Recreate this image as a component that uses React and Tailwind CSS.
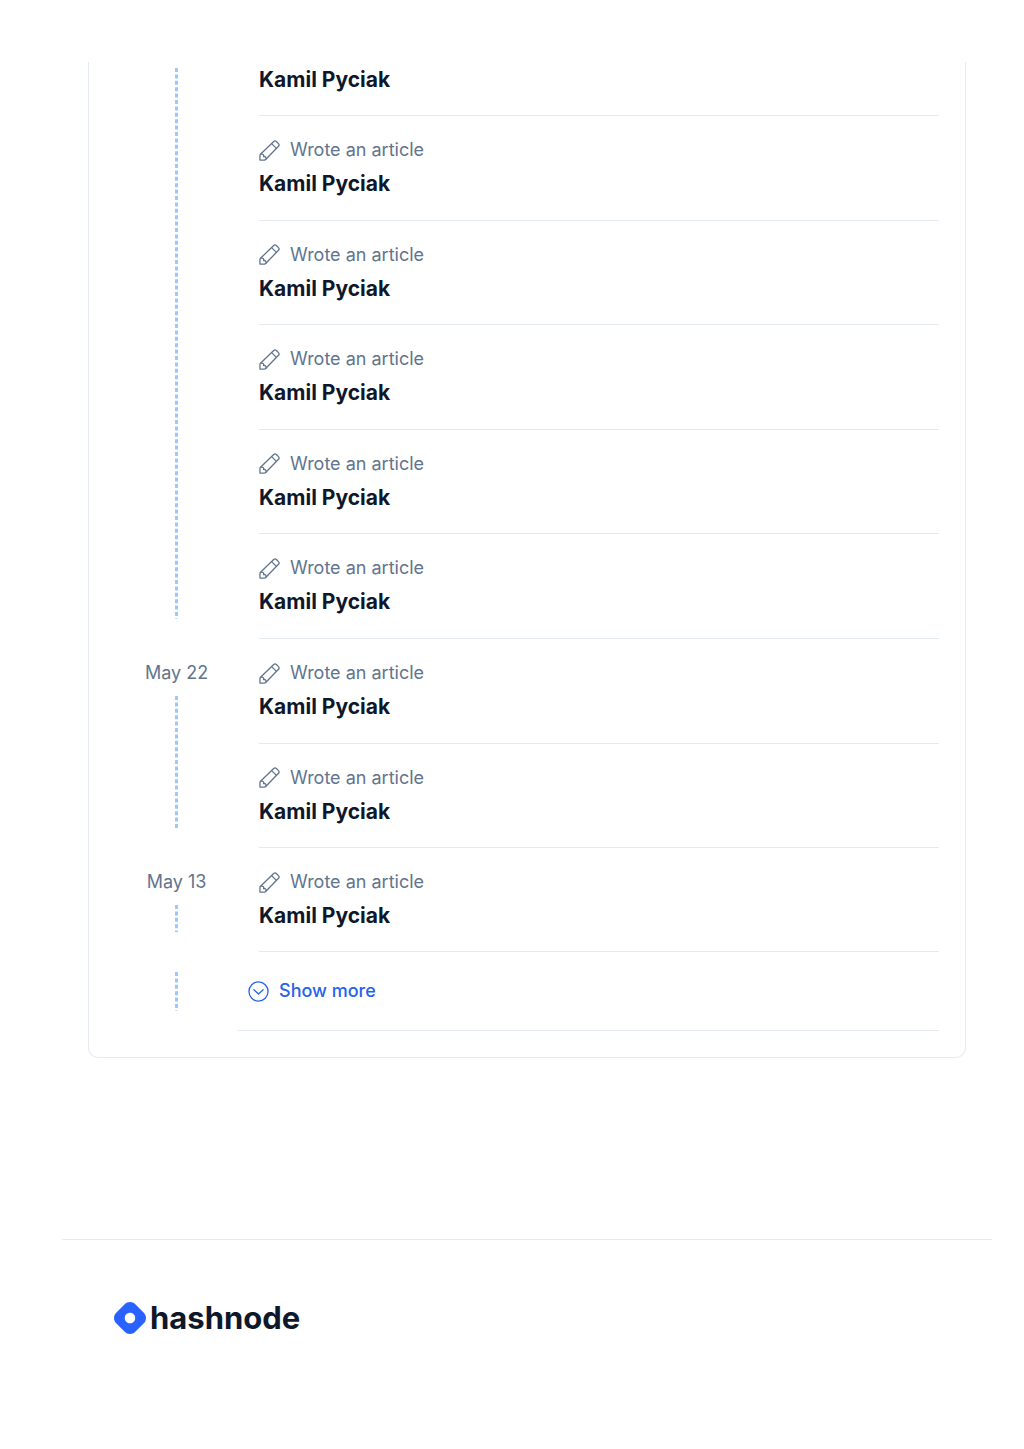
const groups = [
  { id: 'earlier', date: '', titles: Array(6).fill('Kamil Pyciak') },
  { id: 'may-22', date: 'May 22', titles: Array(2).fill('Kamil Pyciak') },
  { id: 'may-13', date: 'May 13', titles: ['Kamil Pyciak'] },
]

function PencilIcon() {
  return (
    <svg className="size-[21px] shrink-0" viewBox="0 0 22 22" fill="none" stroke="currentColor" strokeWidth="1.35" strokeLinecap="round" strokeLinejoin="round" aria-hidden="true">
      <path d="M1 21v-4.6c0-.5.2-1 .6-1.4L15.4 1.6a2 2 0 0 1 2.8 0l2.2 2.2a2 2 0 0 1 0 2.8L7 20.4c-.4.4-.9.6-1.4.6H1Z" />
      <path d="m13.2 3.8 5 5M2.2 14.8c2.2-.3 3 .8 2.6 2.6 1.8-.4 2.9.4 2.6 2.4" />
    </svg>
  )
}

function CircleChevronIcon() {
  return (
    <svg className="size-[21px] shrink-0" viewBox="0 0 22 22" fill="none" stroke="currentColor" strokeWidth="1.35" strokeLinecap="round" strokeLinejoin="round" aria-hidden="true">
      <circle cx="11" cy="11" r="10" />
      <path d="m6.2 9.2 4.8 4.4 4.8-4.4" />
    </svg>
  )
}

// Dashed line that runs down the rest of the date column
function Rail() {
  return (
    <div className="relative min-h-0 w-[3px] flex-1">
      <svg className="absolute inset-0 size-full text-[#9cc8fb]" aria-hidden="true">
        <line x1="1.5" y1="0" x2="1.5" y2="100%" stroke="currentColor" strokeWidth="3" strokeDasharray="4 2.4" />
      </svg>
    </div>
  )
}

function Logo() {
  return (
    <a href="#" className="inline-flex items-center gap-1 text-slate-900">
      <svg className="size-8 text-[#2962ff]" viewBox="0 0 337 337" fill="currentColor" aria-hidden="true">
        <path
          fillRule="evenodd"
          d="M23.155 112.598c-30.873 30.874-30.873 80.93 0 111.804l89.443 89.443c30.874 30.873 80.93 30.873 111.804 0l89.443-89.443c30.873-30.874 30.873-80.93 0-111.804l-89.443-89.443c-30.874-30.873-80.93-30.873-111.804 0l-89.443 89.443Zm184.476 95.033c21.612-21.611 21.612-56.651 0-78.262-21.611-21.612-56.651-21.612-78.262 0-21.612 21.611-21.612 56.651 0 78.262 21.611 21.612 56.651 21.612 78.262 0Z"
        />
      </svg>
      <span className="text-[31px] leading-8 font-bold">hashnode</span>
    </a>
  )
}

function Article({ title, showLabel }) {
  return (
    <li className={showLabel ? 'border-b border-[#e5e9f0] pt-[21px] pb-5' : 'border-b border-[#e5e9f0] pt-[3px] pb-5'}>
      {showLabel && (
        <p className="mb-[6px] flex items-center gap-[10px] text-[18px] leading-[26px] text-slate-500">
          <PencilIcon />
          Wrote an article
        </p>
      )}
      <h2 className="text-[21px] leading-[30px] font-bold text-slate-900">
        <a href="#">{title}</a>
      </h2>
    </li>
  )
}

function Group({ group }) {
  const [first, ...rest] = group.titles
  return (
    <section className="flex">
      <div className={group.date ? 'flex w-[123px] flex-col items-center pt-[21px] pb-5' : 'flex w-[123px] flex-col items-center pt-[6px] pb-5'}>
        {group.date && (
          <p className="mb-[10px] text-[18px] leading-[26px] text-slate-500">{group.date}</p>
        )}
        <Rail />
      </div>
      <div className="flex-1 pl-[21px]">
        {group.date ? (
          <ul className={group.titles.length > 1 ? 'grid min-h-[209px] auto-rows-fr' : 'grid'}>
            {group.titles.map((title, i) => (
              <Article key={i} title={title} showLabel />
            ))}
          </ul>
        ) : (
          <ul>
            <Article title={first} />
            <li>
              <ul className="grid min-h-[523px] auto-rows-fr">
                {rest.map((title, i) => (
                  <Article key={i} title={title} showLabel />
                ))}
              </ul>
            </li>
          </ul>
        )}
      </div>
    </section>
  )
}

export default function App() {
  return (
    <div className="min-h-screen bg-white pt-[62px] pr-8 pb-16 pl-[62px] font-['Inter',sans-serif]">
      <main className="mx-[26px] rounded-b-[10px] border border-t-0 border-[#e5e9f0] px-[26px] pb-[26px]">
        {groups.map((group) => (
          <Group key={group.id} group={group} />
        ))}
        <div className="flex">
          <div className="flex w-[123px] flex-col items-center py-5">
            <Rail />
          </div>
          <div className="flex-1 border-b border-[#e5e9f0] py-[26px] pl-[10px]">
            <button type="button" className="flex items-center gap-[10px] text-[18px] leading-[26px] font-medium text-[#2563eb]">
              <CircleChevronIcon />
              Show more
            </button>
          </div>
        </div>
      </main>
      <footer className="mt-[181px] border-t border-[#e5e9f0] px-[52px] pt-[62px]">
        <Logo />
      </footer>
    </div>
  )
}
